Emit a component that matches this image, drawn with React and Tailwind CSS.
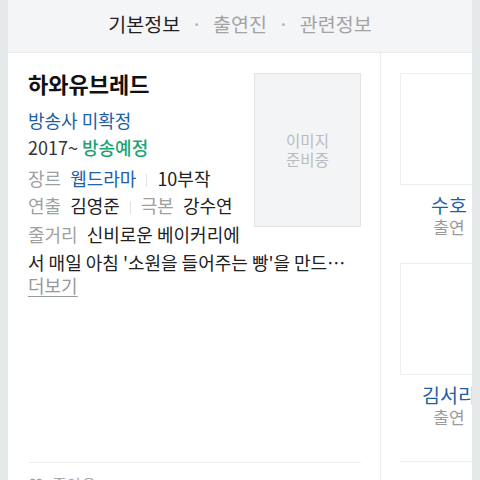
import React from 'react';

const font = { fontFamily: '"Noto Sans CJK KR", "Noto Sans", sans-serif' };

function Sep() {
  return <span className="mx-[10px] inline-block h-[13px] w-px bg-[#e2e2e2] align-[-1px]" />;
}

function CastItem({ name, first }) {
  return (
    <div className={first ? '' : 'mt-[25px]'}>
      <div className="h-[112px] w-[98px] border border-[#eeeeee] bg-white" />
      <div className="mt-[9px] w-[98px] text-center text-[19.5px] leading-[22px] text-[#1f5ea6]">{name}</div>
      <div className="w-[98px] text-center text-[17px] leading-[22px] text-[#9a9a9a]">출연</div>
    </div>
  );
}

export default function App() {
  return (
    <div className="h-[480px] w-[480px] overflow-hidden bg-[#e4e8e8] px-2" style={font}>
      <div className="h-full bg-white">
        {/* Tabs */}
        <div className="flex h-[53px] items-center justify-center border-b border-[#ebebeb] bg-[#f4f5f7] pb-[5px] text-[19.5px]">
          <span className="text-[#222]">기본정보</span>
          <span className="mx-[11px] text-[#b5b5b5]">·</span>
          <span className="text-[#a3a3a3]">출연진</span>
          <span className="mx-[11px] text-[#b5b5b5]">·</span>
          <span className="text-[#a3a3a3]">관련정보</span>
        </div>

        <div className="flex overflow-hidden">
          {/* Info card */}
          <div className="w-[373px] shrink-0 border-r border-[#ececec] pl-[20px] pr-[19px] pt-[16px]">
            <div className="flex">
              <div className="flex-1 text-[18px] text-[#333]">
                <div className="text-[22px] font-bold leading-[28px] text-[#111]">하와유브레드</div>
                <div className="mt-[10px] leading-[27px] text-[#2160a8]">방송사 미확정</div>
                <div className="leading-[27px]">
                  2017~ <span className="font-medium text-[#1ba574]">방송예정</span>
                </div>
                <div className="mt-[3px] leading-[28px]">
                  <span className="mr-[9px] text-[#a0a0a0]">장르</span>
                  <span className="text-[#2160a8]">웹드라마</span>
                  <Sep />
                  <span className="text-[#222]">10부작</span>
                </div>
                <div className="leading-[27px]">
                  <span className="mr-[9px] text-[#a0a0a0]">연출</span>
                  <span className="text-[#222]">김영준</span>
                  <Sep />
                  <span className="mr-[9px] text-[#a0a0a0]">극본</span>
                  <span className="text-[#222]">강수연</span>
                </div>
                <div className="mt-px whitespace-nowrap leading-[28px]">
                  <span className="mr-[9px] text-[#a0a0a0]">줄거리</span>
                  <span className="text-[#222]">신비로운 베이커리에</span>
                </div>
              </div>
              <div className="mt-[4px] flex h-[154px] w-[107px] shrink-0 flex-col items-center justify-center border border-[#e3e3e3] bg-[#f3f4f6] text-[15.5px] leading-[19px] text-[#b8bcc0]">
                <span>이미지</span>
                <span>준비중</span>
              </div>
            </div>
            <div className="overflow-hidden text-ellipsis whitespace-nowrap text-[18px] leading-[28px] text-[#222]">
              서 매일 아침 '소원을 들어주는 빵'을 만드는 파티시에와 그곳을 찾는 사람들의 이야기
            </div>
            <div className="-mt-[1px] text-[18px] leading-[20px] text-[#999] underline underline-offset-[3px]">더보기</div>

            <div className="mt-[167px] border-t border-[#eeeeee]" />
            <div className="mt-[11px] flex items-center text-[16px] leading-[20px]">
              <span className="text-[#f08080]">♥</span>
              <span className="ml-[8px] text-[#aaa]">좋아요</span>
              <span className="ml-[6px] text-[#bbb]">›</span>
            </div>
          </div>

          {/* Cast card */}
          <div className="w-[136px] shrink-0 pl-[19px] pt-[20px]">
            <CastItem name="수호" first />
            <CastItem name="김서리" />
            <div className="mt-[33px] w-[98px] border-t border-[#eeeeee]" />
          </div>
        </div>
      </div>
    </div>
  );
}
